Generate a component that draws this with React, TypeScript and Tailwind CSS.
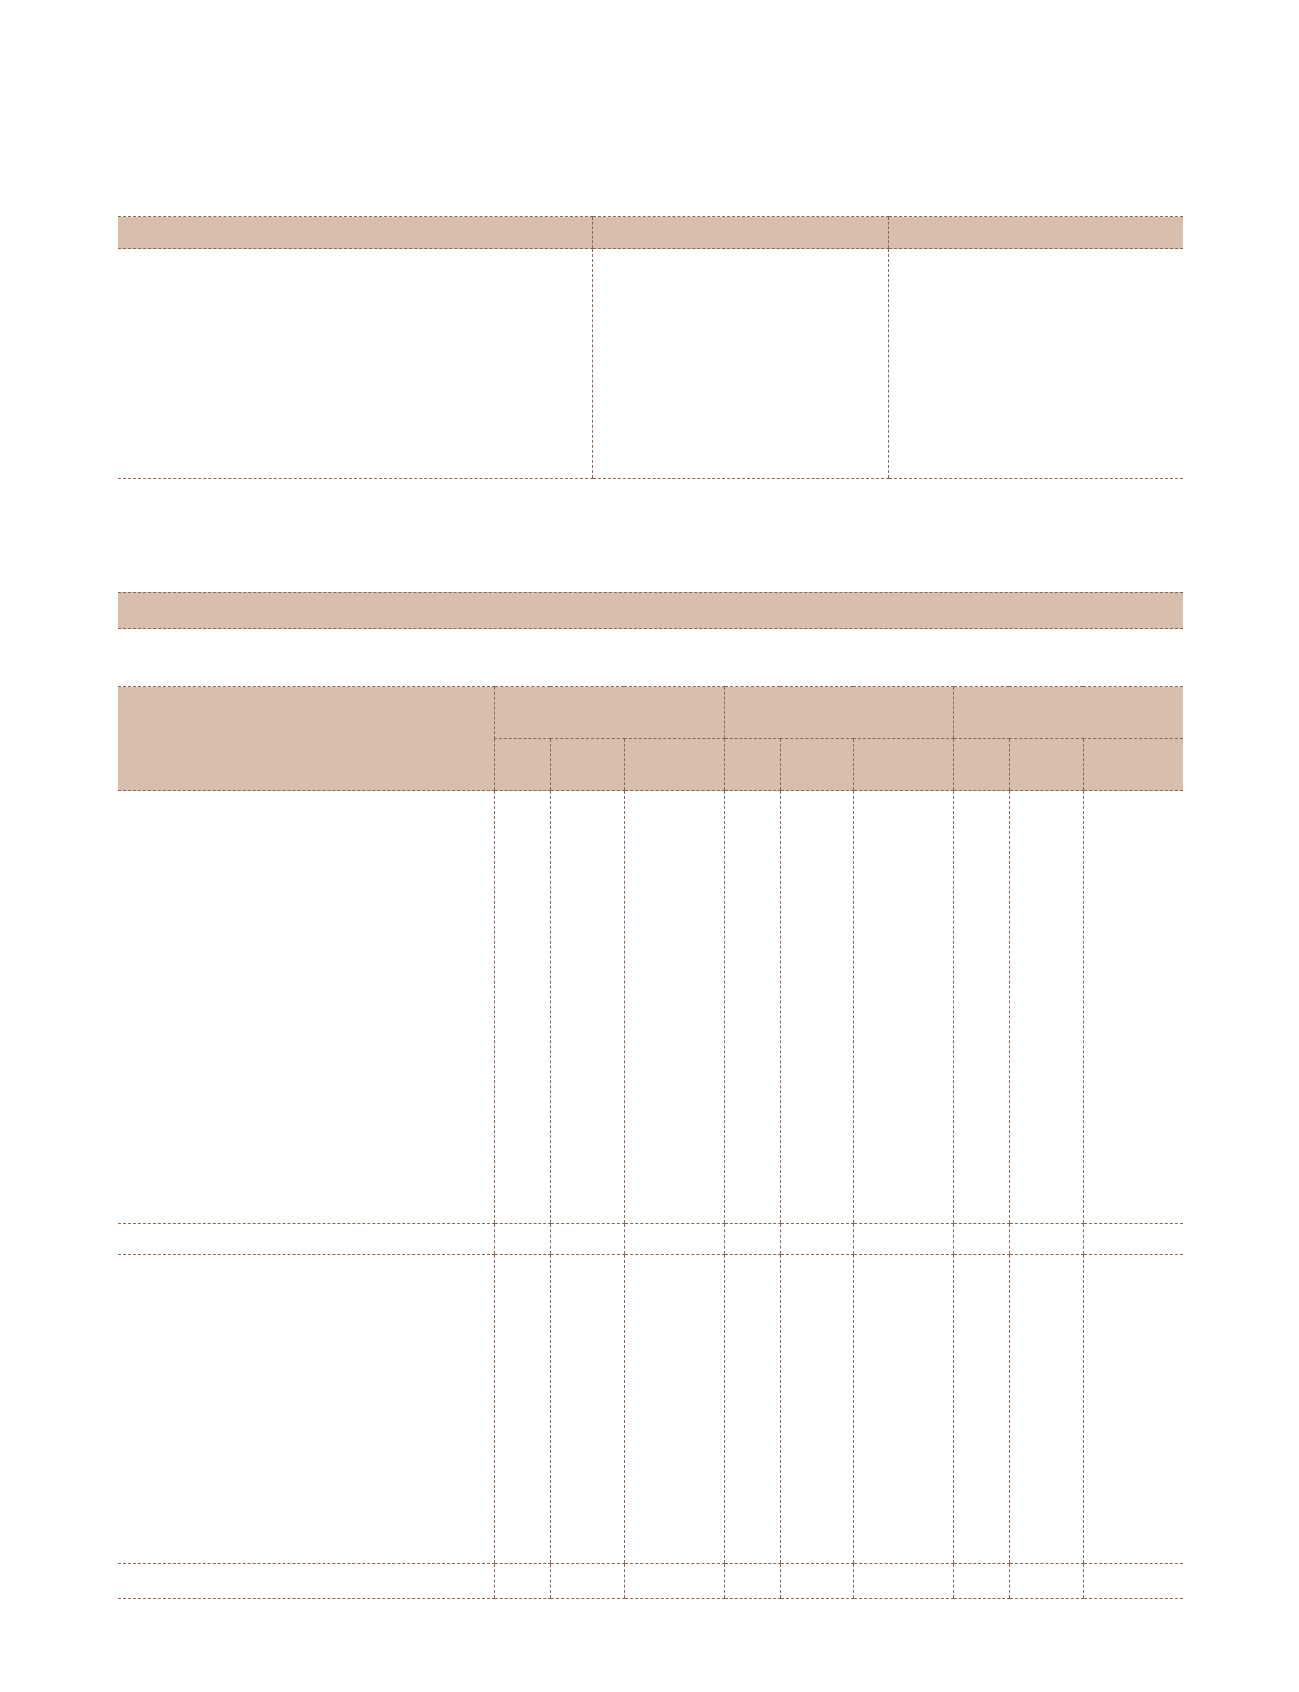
const line = 'border-dashed border-[#8f6650]'

function TopTable() {
  return (
    <table className="w-[1065px] border-collapse table-fixed">
      <colgroup>
        <col className="w-[474px]" />
        <col className="w-[296px]" />
        <col className="w-[295px]" />
      </colgroup>
      <thead>
        <tr className="h-[32px] bg-[#d8bfad]">
          <th className={`border-t border-b ${line}`} />
          <th className={`border-t border-b border-l ${line}`} />
          <th className={`border-t border-b border-l ${line}`} />
        </tr>
      </thead>
      <tbody>
        <tr className="h-[230px]">
          <td className={`border-b ${line}`} />
          <td className={`border-b border-l ${line}`} />
          <td className={`border-b border-l ${line}`} />
        </tr>
      </tbody>
    </table>
  )
}

const subCols = [56, 74, 100, 56, 73, 100, 56, 74, 100]
const colWidths = ['w-[56px]', 'w-[74px]', 'w-[100px]', 'w-[56px]', 'w-[73px]', 'w-[100px]', 'w-[56px]', 'w-[74px]', 'w-[100px]']
const bodyRows = ['h-[433px]', 'h-[31px]', 'h-[309px]', 'h-[35px]']

function MainTable() {
  return (
    <table className="w-[1065px] border-collapse table-fixed">
      <colgroup>
        <col className="w-[376px]" />
        {colWidths.map((w, i) => (
          <col key={i} className={w} />
        ))}
      </colgroup>
      <thead className="bg-[#d8bfad]">
        <tr className="h-[52px]">
          <th rowSpan={2} className={`border-t border-b ${line}`} />
          <th colSpan={3} className={`border-t border-b border-l ${line}`} />
          <th colSpan={3} className={`border-t border-b border-l ${line}`} />
          <th colSpan={3} className={`border-t border-b border-l ${line}`} />
        </tr>
        <tr className="h-[52px]">
          {subCols.map((_, i) => (
            <th key={i} className={`border-b border-l ${line}`} />
          ))}
        </tr>
      </thead>
      <tbody>
        {bodyRows.map((h, r) => (
          <tr key={r} className={h}>
            <td className={`border-b ${line}`} />
            {subCols.map((_, i) => (
              <td key={i} className={`border-b border-l ${line}`} />
            ))}
          </tr>
        ))}
      </tbody>
    </table>
  )
}

export default function App() {
  return (
    <div className="min-h-[1692px] w-[1299px] bg-white pt-[216px] font-['Liberation_Sans',sans-serif]">
      <div className="ml-[118px] w-[1065px]">
        <TopTable />

        <div className={`mt-[113px] h-[37px] border-t border-b bg-[#d8bfad] ${line}`} />

        <div className="mt-[57px]">
          <MainTable />
        </div>
      </div>
    </div>
  )
}
